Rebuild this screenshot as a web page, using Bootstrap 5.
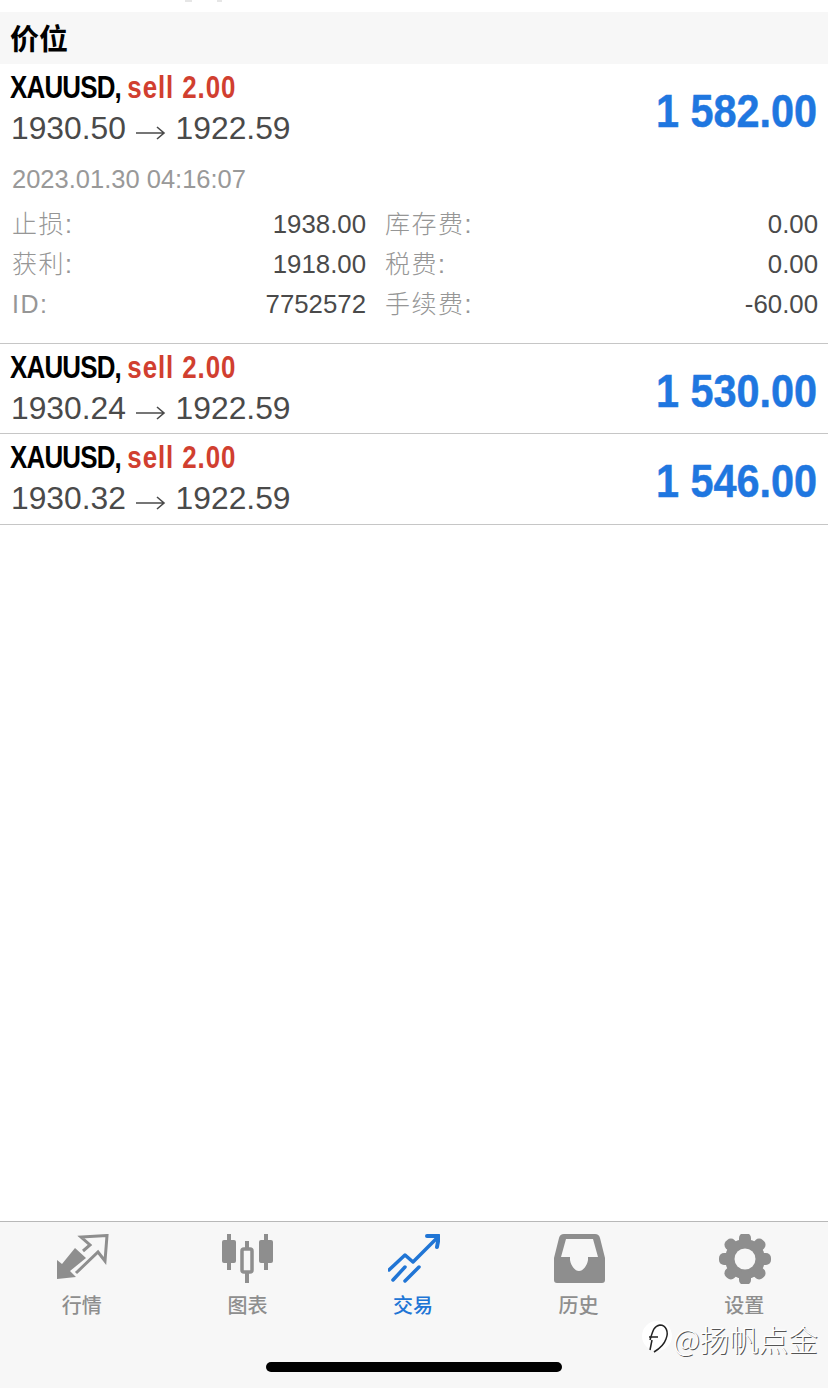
<!DOCTYPE html>
<html lang="zh">
<head>
  <meta charset="UTF-8">
  <title>交易</title>
  <link href="https://cdn.jsdelivr.net/npm/bootstrap@5.3.0/dist/css/bootstrap.min.css" rel="stylesheet">
  <style>
    body {
      background: #fff;
      font-family: "Liberation Sans", "Noto Sans CJK SC", sans-serif;
      height: 1388px;
      overflow: hidden;
    }
    .top-strip { height: 12px; }
    .top-strip svg { display: block; }
    .section-head {
      height: 52px;
      background: #f7f7f7;
      padding-left: 10px;
      font: 700 29px/50px "Noto Sans CJK SC", sans-serif;
      color: #000;
    }
    .order-row {
      border-bottom: 1px solid #c6c6c6;
    }
    .order-head {
      height: 89px;
      padding: 4px 11px 0 10px;
    }
    .order-row:last-child .order-head { height: 90px; }
    .order-title {
      font: 700 32px/38px "Liberation Sans", sans-serif;
      color: #000;
      letter-spacing: -1px;
      white-space: nowrap;
      transform: scaleX(.81);
      transform-origin: left center;
    }
    .order-title span { color: #d13f30; letter-spacing: 1.1px; }
    .order-price {
      font-size: 31.8px;
      line-height: 44px;
      color: #4a4a4a;
      white-space: nowrap;
      padding-left: 1px;
    }
    .order-price svg { margin: 0 1px; vertical-align: -1px; }
    .order-profit {
      font: 700 46px/1 "Liberation Sans", sans-serif;
      color: #1f77e0;
      white-space: nowrap;
      transform: scaleX(.9);
      transform-origin: right center;
      -webkit-text-stroke: .5px #1f77e0;
    }
    .order-date {
      font-size: 25.5px;
      line-height: 40px;
      color: #999;
      padding: 6px 0 0 12px;
    }
    .order-grid {
      display: grid;
      grid-template-columns: 354px 433px;
      column-gap: 19px;
      grid-auto-rows: 40px;
      padding: 5px 10px 19px 12px;
      font-size: 25.8px;
      line-height: 40px;
      color: #4a4a4a;
    }
    .order-grid label {
      color: #969696;
      font-size: 25px;
      font-weight: 300;
      letter-spacing: 1.5px;
      margin: 0;
    }
    .tabbar {
      height: 167px;
      background: #f7f7f7;
      border-top: 1px solid #b8b8b8;
    }
    .tab-item {
      flex: 1 1 0;
      padding-top: 12px;
      text-align: center;
      color: #8e8e8e;
      font: 500 20px/28px "Noto Sans CJK SC", sans-serif;
    }
    .tab-item.is-active { color: #2075d5; }
    .tab-item svg { display: block; margin: 0 auto 7px; height: 50px; }
    .tab-label { display: block; margin-right: 2px; }
    .home-bar {
      width: 296px;
      height: 10px;
      border-radius: 5px;
      background: #000;
      margin: 0 auto;
    }
    .tabs { height: 140px; }
    .water-mark {
      position: absolute;
      left: 641px;
      top: 1320px;
      display: flex;
      align-items: center;
      color: #fff;
      font: 300 29.5px/30px "Noto Sans CJK SC", sans-serif;
      text-shadow: 1px 1px 0 #555;
      white-space: nowrap;
    }
  </style>
</head>
<body class="d-flex flex-column">

  <div class="top-strip">
    <svg width="828" height="12"><path d="M185 0h7v2h-7zM217 0h5v2h-5z" fill="#e6e6e6"/></svg>
  </div>
  <div class="section-head">价位</div>

  <!-- orders -->
  <div class="flex-grow-1">
    <div class="order-row">
      <div class="order-head d-flex justify-content-between align-items-center">
        <div class="align-self-start">
          <div class="order-title">XAUUSD, <span>sell 2.00</span></div>
          <div class="order-price">1930.50 <svg width="30" height="14" viewBox="0 0 30 14"><path d="M0 7H28M21 1 28 7 21 13" fill="none" stroke="#4a4a4a" stroke-width="1.6"/></svg> 1922.59</div>
        </div>
        <div class="order-profit">1 582.00</div>
      </div>
      <div class="order-date">2023.01.30 04:16:07</div>
      <div class="order-grid">
        <div class="d-flex justify-content-between"><label>止损:</label><div>1938.00</div></div>
        <div class="d-flex justify-content-between"><label>库存费:</label><div>0.00</div></div>
        <div class="d-flex justify-content-between"><label>获利:</label><div>1918.00</div></div>
        <div class="d-flex justify-content-between"><label>税费:</label><div>0.00</div></div>
        <div class="d-flex justify-content-between"><label>ID:</label><div>7752572</div></div>
        <div class="d-flex justify-content-between"><label>手续费:</label><div>-60.00</div></div>
      </div>
    </div>
    <div class="order-row">
      <div class="order-head d-flex justify-content-between align-items-center">
        <div class="align-self-start">
          <div class="order-title">XAUUSD, <span>sell 2.00</span></div>
          <div class="order-price">1930.24 <svg width="30" height="14" viewBox="0 0 30 14"><path d="M0 7H28M21 1 28 7 21 13" fill="none" stroke="#4a4a4a" stroke-width="1.6"/></svg> 1922.59</div>
        </div>
        <div class="order-profit">1 530.00</div>
      </div>
    </div>
    <div class="order-row">
      <div class="order-head d-flex justify-content-between align-items-center">
        <div class="align-self-start">
          <div class="order-title">XAUUSD, <span>sell 2.00</span></div>
          <div class="order-price">1930.32 <svg width="30" height="14" viewBox="0 0 30 14"><path d="M0 7H28M21 1 28 7 21 13" fill="none" stroke="#4a4a4a" stroke-width="1.6"/></svg> 1922.59</div>
        </div>
        <div class="order-profit">1 546.00</div>
      </div>
    </div>
  </div>

  <!-- bottom tabs -->
  <div class="tabbar">
    <div class="tabs d-flex">
      <div class="tab-item">
        <svg width="52" height="50" viewBox="0 0 52 50">
          <path d="M0 45V26L5 30 18 14 29 24 13 37 19 43Z" fill="#8e8e8e"/>
          <path d="M26 17 33 11 24 3 50 1.5 48 27 41 18 19 39" fill="none" stroke="#8e8e8e" stroke-width="3"/>
        </svg>
        <span class="tab-label">行情</span>
      </div>
      <div class="tab-item">
        <svg width="52" height="50" viewBox="0 0 52 50">
          <path d="M7 0V36M44 0V36M25 7V49" stroke="#8e8e8e" stroke-width="4" fill="none"/>
          <rect x="0" y="6" width="14" height="23" rx="2" fill="#8e8e8e"/>
          <rect x="37" y="6" width="14" height="23" rx="2" fill="#8e8e8e"/>
          <rect x="20" y="15" width="10" height="23" rx="2" fill="#f7f7f7" stroke="#8e8e8e" stroke-width="3.5"/>
        </svg>
        <span class="tab-label">图表</span>
      </div>
      <div class="tab-item is-active">
        <svg width="52" height="50" viewBox="0 0 52 50">
          <path d="M1 36 17 21 25 28 49 4" fill="none" stroke="#2075d5" stroke-width="3.5" stroke-linecap="round" stroke-linejoin="round"/>
          <path d="M39 2H51L49 13" fill="none" stroke="#2075d5" stroke-width="4" stroke-linecap="round" stroke-linejoin="round"/>
          <path d="M5 46 17 33M17 47 31 33" stroke="#2075d5" stroke-width="3.5" stroke-linecap="round"/>
        </svg>
        <span class="tab-label">交易</span>
      </div>
      <div class="tab-item">
        <svg width="52" height="50" viewBox="0 0 52 50">
          <path fill="#8e8e8e" fill-rule="evenodd" d="M10 0H41Q45 0 46 4L51 24V46Q51 49 48 49H3Q0 49 0 46V24L5 4Q6 0 10 0ZM12 5H39L44 23H34V26C33 32 29 37 25 37 21 37 17 32 16 26V23H7Z"/>
        </svg>
        <span class="tab-label">历史</span>
      </div>
      <div class="tab-item">
        <svg width="52" height="50" viewBox="-26 -25 52 50">
          <g fill="#8e8e8e">
            <circle r="20"/>
            <rect x="-6" y="-26" width="12" height="52" rx="5"/>
            <rect x="-6" y="-26" width="12" height="52" rx="5" transform="rotate(45)"/>
            <rect x="-6" y="-26" width="12" height="52" rx="5" transform="rotate(90)"/>
            <rect x="-6" y="-26" width="12" height="52" rx="5" transform="rotate(135)"/>
          </g>
          <circle r="10.5" fill="#f7f7f7"/>
        </svg>
        <span class="tab-label">设置</span>
      </div>
    </div>
    <div class="home-bar"></div>
  </div>

  <!-- photo watermark over the tab bar -->
  <div class="water-mark">
    <svg width="32" height="36" viewBox="0 0 32 36">
      <circle cx="16" cy="16" r="15" fill="#fff"/>
      <path d="M9 20C12 10 13 6 19 5 25 5 28 12 25 19 23 25 18 29 13 32" fill="none" stroke="#222" stroke-width="1.5"/>
      <path d="M8 17H17M11 20 9 30" fill="none" stroke="#222" stroke-width="1.5"/>
    </svg>
    @扬帆点金
  </div>

  <script src="https://cdn.jsdelivr.net/npm/bootstrap@5.3.0/dist/js/bootstrap.bundle.min.js"></script>
</body>
</html>
